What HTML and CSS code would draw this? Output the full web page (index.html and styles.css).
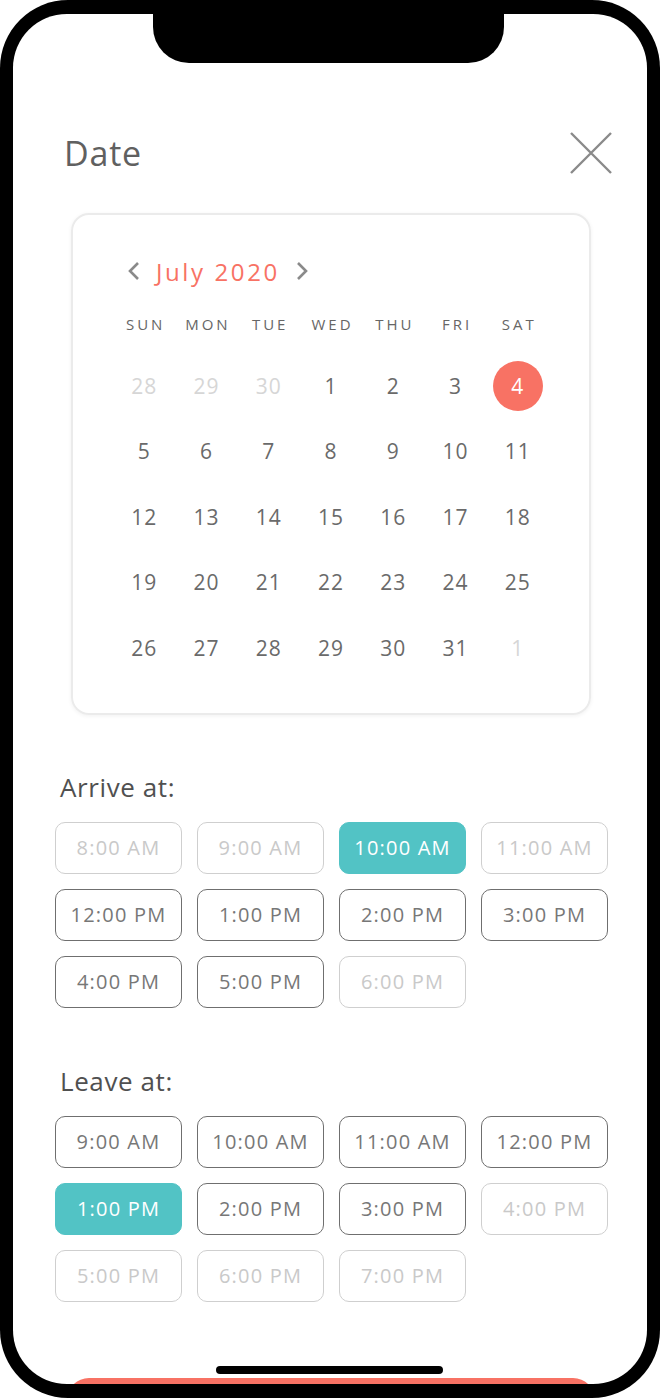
FILE: index.html
```html
<!DOCTYPE html>
<html lang="en">

<head>
    <meta charset="UTF-8">
    <meta name="viewport" content="width=device-width, initial-scale=1.0">
    <title>Date</title>
    <link rel="stylesheet" href="styles.css">
</head>

<body>
    <div class="phone">
        <div class="screen">
            <div class="top-bar">
                <h1 class="title">Date</h1>
                <svg class="close" width="42" height="42" viewBox="0 0 42 42">
                    <path d="M1 1 L41 41 M41 1 L1 41" stroke="#8a8a8a" stroke-width="2.4" fill="none" />
                </svg>
            </div>

            <div class="calendar">
                <div class="month">
                    <svg class="chev" width="14" height="20" viewBox="0 0 14 20">
                        <path d="M11 2 L3 10 L11 18" stroke="#8a8a8a" stroke-width="2.6" fill="none" />
                    </svg>
                    <span class="month-name">July 2020</span>
                    <svg class="chev" width="14" height="20" viewBox="0 0 14 20">
                        <path d="M3 2 L11 10 L3 18" stroke="#8a8a8a" stroke-width="2.6" fill="none" />
                    </svg>
                </div>

                <div class="weekdays">
                    <span>SUN</span><span>MON</span><span>TUE</span><span>WED</span><span>THU</span><span>FRI</span><span>SAT</span>
                </div>

                <div class="days">
                    <span class="day muted">28</span><span class="day muted">29</span><span class="day muted">30</span>
                    <span class="day">1</span><span class="day">2</span><span class="day">3</span>
                    <span class="day"><b class="picked">4</b></span>
                    <span class="day">5</span><span class="day">6</span><span class="day">7</span><span class="day">8</span>
                    <span class="day">9</span><span class="day">10</span><span class="day">11</span>
                    <span class="day">12</span><span class="day">13</span><span class="day">14</span><span class="day">15</span>
                    <span class="day">16</span><span class="day">17</span><span class="day">18</span>
                    <span class="day">19</span><span class="day">20</span><span class="day">21</span><span class="day">22</span>
                    <span class="day">23</span><span class="day">24</span><span class="day">25</span>
                    <span class="day">26</span><span class="day">27</span><span class="day">28</span><span class="day">29</span>
                    <span class="day">30</span><span class="day">31</span><span class="day muted">1</span>
                </div>
            </div>

            <h2 class="label arrive-label">Arrive at:</h2>
            <div class="times">
                <button class="slot off">8:00 AM</button>
                <button class="slot off">9:00 AM</button>
                <button class="slot on">10:00 AM</button>
                <button class="slot off">11:00 AM</button>
                <button class="slot">12:00 PM</button>
                <button class="slot">1:00 PM</button>
                <button class="slot">2:00 PM</button>
                <button class="slot">3:00 PM</button>
                <button class="slot">4:00 PM</button>
                <button class="slot">5:00 PM</button>
                <button class="slot off">6:00 PM</button>
            </div>

            <h2 class="label leave-label">Leave at:</h2>
            <div class="times">
                <button class="slot">9:00 AM</button>
                <button class="slot">10:00 AM</button>
                <button class="slot">11:00 AM</button>
                <button class="slot">12:00 PM</button>
                <button class="slot on">1:00 PM</button>
                <button class="slot">2:00 PM</button>
                <button class="slot">3:00 PM</button>
                <button class="slot off">4:00 PM</button>
                <button class="slot off">5:00 PM</button>
                <button class="slot off">6:00 PM</button>
                <button class="slot off">7:00 PM</button>
            </div>

            <button class="confirm" aria-label="Confirm"></button>
        </div>

        <div class="notch"></div>
        <div class="home-bar"></div>
    </div>
</body>

</html>
```

FILE: styles.css
```css
body {
    margin: 0;
    background-color: #fff;
    font-family: "Open Sans", "Noto Sans", sans-serif;
}

.phone {
    position: relative;
    width: 660px;
    height: 1398px;
    box-sizing: border-box;
    padding: 14px 13px;
    background-color: #000;
    border-radius: 68px;
}

.screen {
    height: 100%;
    background-color: #fff;
    border-radius: 54px;
    overflow: hidden;
}

.notch {
    position: absolute;
    top: 0;
    left: 153px;
    width: 351px;
    height: 63px;
    background-color: #000;
    border-radius: 0 0 36px 36px;
}

.home-bar {
    position: absolute;
    top: 1366px;
    left: 216px;
    width: 227px;
    height: 8px;
    background-color: #000;
    border-radius: 4px;
}

.top-bar {
    display: flex;
    justify-content: space-between;
    align-items: center;
    height: 50px;
    padding: 114px 35px 0 51px;
}

.title {
    margin: 0;
    font-size: 34px;
    font-weight: 500;
    color: #606060;
    letter-spacing: 0.8px;
}

.calendar {
    width: 520px;
    box-sizing: border-box;
    margin: 35px 0 0 58px;
    padding: 36px 40px 32px;
    border: 2px solid #ebebeb;
    border-radius: 18px;
    box-shadow: 0 1px 4px rgba(0, 0, 0, 0.06);
}

.month {
    display: flex;
    align-items: center;
    height: 40px;
    margin-left: 14px;
    gap: 15px;
}

.month-name {
    font-size: 24px;
    color: #f87264;
    letter-spacing: 2.6px;
}

.weekdays {
    display: grid;
    grid-template-columns: repeat(7, 1fr);
    margin-top: 23px;
    height: 20px;
    line-height: 20px;
    text-align: center;
    font-size: 15px;
    letter-spacing: 3px;
    text-indent: 3px;
    color: #666;
}

.days {
    display: grid;
    grid-template-columns: repeat(7, 1fr);
    grid-auto-rows: 65.5px;
    margin-top: 19px;
}

.day {
    display: flex;
    align-items: center;
    justify-content: center;
    font-size: 21px;
    letter-spacing: 1px;
    color: #6a6a6a;
}

.day.muted {
    color: #d6d6d6;
}

.picked {
    display: flex;
    align-items: center;
    justify-content: center;
    width: 50px;
    height: 50px;
    border-radius: 50%;
    background-color: #f87264;
    color: #fff;
    font-weight: normal;
}

.label {
    margin: 0;
    height: 30px;
    line-height: 30px;
    padding-left: 47px;
    font-size: 26px;
    font-weight: 500;
    color: #505050;
    letter-spacing: 0.6px;
}

.arrive-label {
    margin-top: 57px;
}

.leave-label {
    margin-top: 58px;
}

.times {
    display: grid;
    grid-template-columns: repeat(4, 127px);
    grid-auto-rows: 52px;
    gap: 15px;
    margin-top: 20px;
    padding-left: 42px;
}

.slot {
    font-family: inherit;
    font-size: 20px;
    letter-spacing: 1.2px;
    color: #777;
    background-color: #fff;
    border: 1.6px solid #6f6f6f;
    border-radius: 10px;
    padding: 0;
}

.slot.off {
    color: #c9c9c9;
    border-color: #cfcfcf;
}

.slot.on {
    color: #fff;
    background-color: #52c3c5;
    border-color: #52c3c5;
}

.confirm {
    display: block;
    width: 528px;
    height: 60px;
    margin: 76px 0 0 54px;
    border: none;
    border-radius: 22px;
    background-color: #f87264;
}
```
